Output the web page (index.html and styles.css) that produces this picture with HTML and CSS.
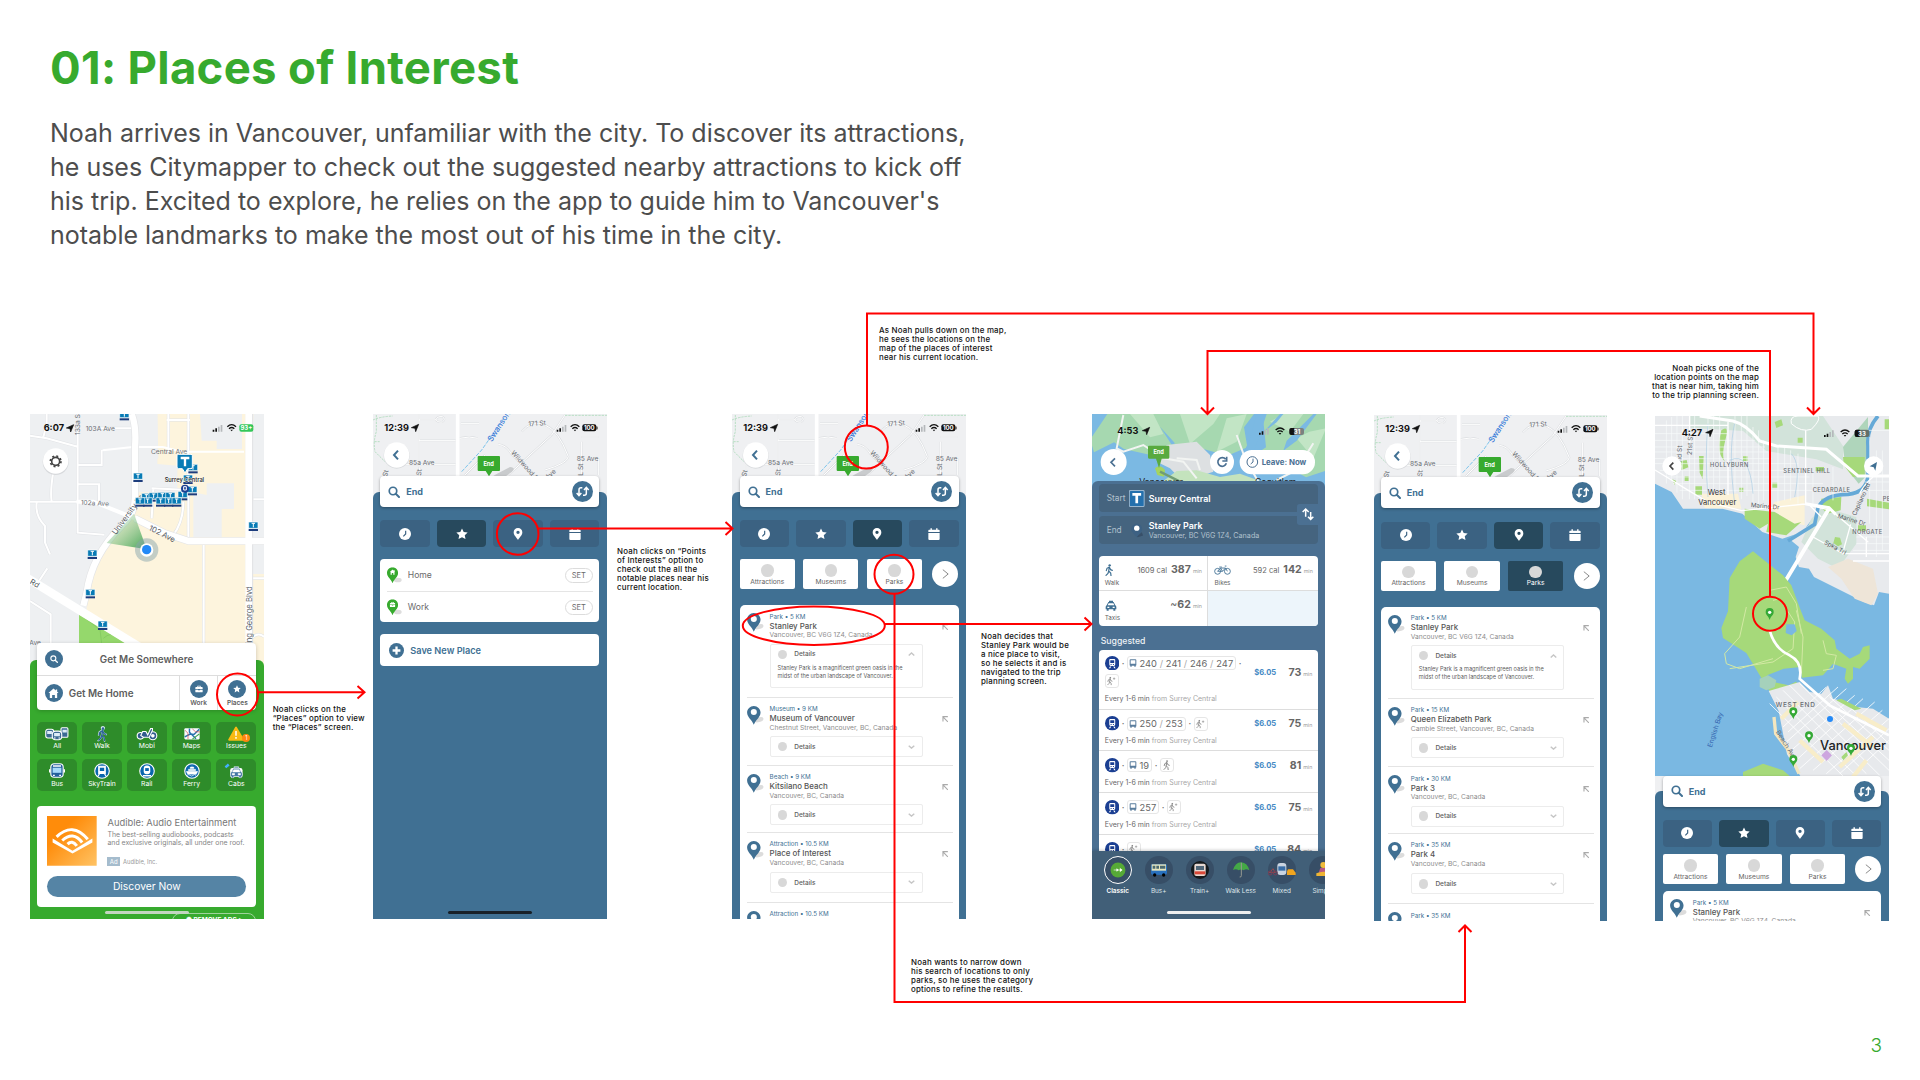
FILE: index.html
```html
<!DOCTYPE html>
<html lang="en">
<head>
<meta charset="utf-8">
<title>01: Places of Interest</title>
<link rel="stylesheet" href="styles.css">
</head>
<body>
<svg class="defs" aria-hidden="true">
  <symbol id="search" viewBox="0 0 24 24"><circle cx="10" cy="10" r="7.500" fill="none" stroke="currentColor" stroke-width="3.400"/><path d="M15.500 15.500 22 22" stroke="currentColor" stroke-width="4" stroke-linecap="round"/></symbol>
  <symbol id="swap" viewBox="0 0 63 63"><circle cx="31.500" cy="31.500" r="31.500" fill="#407093"/><g fill="none" stroke="#fff" stroke-width="4.500"><path d="M31 20h-4q-6 0-6 6v17M14 36l7 8 7-8M33 43h4q6 0 6-6V20M36 27l7-8 7 8"/></g></symbol>
  <symbol id="clock" viewBox="0 0 36 36"><circle cx="18" cy="18" r="18" fill="#fff"/><path d="M20 8v10l-7 7" fill="none" stroke="#3b6282" stroke-width="3.500"/></symbol>
  <symbol id="star" viewBox="0 0 24 24"><path d="M12 .8l3.400 7.200 7.900 1-5.800 5.400 1.500 7.800-7-3.900-7 3.900 1.500-7.800L.7 9l7.900-1z" fill="#fff"/></symbol>
  <symbol id="pin" viewBox="0 0 26 36"><path fill-rule="evenodd" d="M13 0C5.500 0 0 5.500 0 12.500 0 22 9 28 13 36c4-8 13-14 13-23.500C26 5.500 20.500 0 13 0zm0 8a5 5 0 1 1 0 10 5 5 0 0 1 0-10z" fill="currentColor"/></symbol>
  <symbol id="calendar" viewBox="0 0 32 34"><path d="M2 5h4V1h4v4h12V1h4v4h4q2 0 2 2v4H0V7q0-2 2-2zM0 14h32v17q0 3-3 3H3q-3 0-3-3z" fill="#fff"/></symbol>
  <symbol id="listpin" viewBox="0 0 50 58"><ellipse cx="35" cy="41" rx="14" ry="7" fill="#dcdcdc" transform="rotate(-15 35 41)"/><path d="M20 0C9 0 0 9 0 19c0 15 15 22 20 37 5-15 20-22 20-37C40 9 31 0 20 0z" fill="#407093"/><circle cx="20" cy="18" r="9" fill="#fff"/></symbol>
  <symbol id="greenpin" viewBox="0 0 46 50"><ellipse cx="33" cy="39" rx="12" ry="7" fill="#ddd"/><path d="M17 0C7 0 0 8 0 17c0 13 13 18 17 32 4-14 17-19 17-32C34 8 27 0 17 0z" fill="#37aa2e"/></symbol>
  <symbol id="house" viewBox="0 0 24 24"><path d="M12 1 1 11h3v11h5v-7h6v7h5V11h3l-3-2.700V3h-3v2.500z" fill="#fff"/></symbol>
  <symbol id="case" viewBox="0 0 24 24"><path d="M7 6V3q0-1 1-1h8q1 0 1 1v3h4q2 0 2 2v4H1V8q0-2 2-2zm3 0h4V4h-4zM1 14h8v2h6v-2h8v6q0 2-2 2H3q-2 0-2-2z" fill="#fff"/></symbol>
  <symbol id="northwest" viewBox="0 0 20 20"><path d="M18 2H3v15M3 3l15 15" fill="none" stroke="#aaa" stroke-width="3.400"/></symbol>
  <symbol id="down" viewBox="0 0 20 12"><path d="m2 2 8 7 8-7" fill="none" stroke="#c6c6c6" stroke-width="4"/></symbol>
  <symbol id="up" viewBox="0 0 20 12"><path d="m2 10 8-7 8 7" fill="none" stroke="#c6c6c6" stroke-width="4"/></symbol>
  <symbol id="next" viewBox="0 0 20 30"><path d="m2 2 16 13L2 28" fill="none" stroke="#777" stroke-width="2.600"/></symbol>
  <symbol id="train" viewBox="0 0 44 44"><circle cx="22" cy="22" r="22" fill="#1b3f92"/><path d="M16 9h12q3 0 3 3v14q0 4-4 4H17q-4 0-4-4V12q0-3 3-3zm0 4v8h12v-8zm1 11v3h3v-3zm7 0v3h3v-3zM15 32h4l-3 5h-4zm10 0h4l3 5h-4z" fill="#fff" fill-rule="evenodd"/></symbol>
  <symbol id="bus" viewBox="0 0 24 24"><path d="M5 1h14q3 0 3 3v14q0 2-2 2v3h-4v-3H8v3H4v-3q-2 0-2-2V4q0-3 3-3zm0 3v10h14V4z" fill="#5a7d9d" fill-rule="evenodd"/></symbol>
  <symbol id="walker" viewBox="0 0 24 36"><circle cx="14" cy="4" r="3.500" fill="currentColor"/><path d="M13 9 6 13 4 20M13 9l-2 12 6 6 1 8M11 21l-2 7-6 6M14 11l3 6 5 2" fill="none" stroke="currentColor" stroke-width="3.600" stroke-linecap="round"/></symbol>
  <symbol id="walkplus" viewBox="0 0 38 36"><use href="#walker" width="24" height="36"/><path d="M30 3v10M25 8h10" stroke="currentColor" stroke-width="2.500"/></symbol>
  <symbol id="taxi" viewBox="0 0 34 36"><path d="M11 5h12v4H11zM9 9h16l5 10q3 2 3 5v7h-3v4h-6v-4H10v4H4v-4H1v-7q0-3 3-5zm1 4-3 6h20l-3-6zM6 23v4h6v-4zm16 0v4h6v-4z" fill="currentColor" fill-rule="evenodd"/></symbol>
  <symbol id="bike" viewBox="0 0 52 30"><g fill="none" stroke="currentColor" stroke-width="2.700"><circle cx="11" cy="19" r="9"/><circle cx="41" cy="19" r="9"/><path d="m11 19 9-10h15L26 19H11M35 9l6 10M33 3h5M20 9l6 10M16 6h8"/></g></symbol>
  <g id="nav"><path d="M0 10 22 0 13 22 11 12z" fill="#111" stroke="#111" stroke-width="2" stroke-linejoin="round"/></g>
  <g id="bars"><path d="M0 14h5v6H0zM8 10h5v10H8z" fill="#111"/><path d="M16 5h5v15h-5zM24 0h5v20h-5z" fill="#b5b8bb"/></g>
  <g id="wifi" fill="none" stroke="#111" stroke-width="4"><path d="M0 7q13-12 26 0M5 13q8-7 16 0"/><path d="m9 16 4 5 4-5z" fill="#111" stroke="none"/></g>
  <g id="stop"><path d="M-14-12h28v19h-28z" fill="#087bb5" stroke="#fff" stroke-width="2"/><path d="M-14 9h28v6h-28z" fill="#1d3d7d"/><path d="M-5-8H5M0-8V4" stroke="#fff" stroke-width="3"/></g>
  <g id="mappin"><path d="M0 0c-3-12-12-14-12-24a12 12 0 0 1 24 0C12-14 3-12 0 0z" fill="#35a936"/><circle cy="-23" r="5" fill="#fff"/></g>

  <symbol id="suburb" viewBox="24 27 702 252">
    <path d="M24 27h702v252H24z" fill="#eff0f2"/>
    <path d="M162 27v160M162 106h110M162 45h50q5-12 20-10 12 8 0 16-15 2-20-8M66 279V180M66 178h206M163 187v50M288 55h54M284 100q30-8 54 0M300 210l60-60M400 118q25 3 40 30l80 80M430 210 560 90l40-60M470 80q30-36 70-20 40 15 70 95-3 20-70 40M650 110v100M650 96h50M700 160v50" fill="none" stroke="#dddfe2" stroke-width="6"/>
    <path d="M162 27v160M162 106h110M162 45h50q5-12 20-10 12 8 0 16-15 2-20-8M66 279V180M66 178h206M163 187v50M288 55h54M284 100q30-8 54 0M300 210l60-60M400 118q25 3 40 30l80 80M430 210 560 90l40-60M470 80q30-36 70-20 40 15 70 95-3 20-70 40M650 110v100M650 96h50M700 160v50" fill="none" stroke="#fff" stroke-width="3"/>
    <path d="M278 27v200" stroke="#fff" stroke-width="11"/>
    <path d="M24 45q20-10 60-12M34 30v50q-10 30-4 60l30 30M28 110h16M600 31h126" fill="none" stroke="#b8dfc4" stroke-width="3" stroke-dasharray="7 3"/>
    <path d="m290 200 60-65 70-100" fill="none" stroke="#7cc4ec" stroke-width="3" stroke-dasharray="12 4"/>
    <path d="m385 212 50-26q20 2 5 15l-20 14z" fill="#c9cbcd"/>
    <g class="streets"><text x="132" y="179">85a Ave</text><text x="490" y="64" transform="rotate(-4 490 60)">171 St</text><text x="635" y="168">85 Ave</text><text transform="translate(437 144) rotate(48)">Wildwood Pl</text><text transform="translate(548 224) rotate(-42)">Ave</text><text transform="translate(655 212) rotate(-90)">L St</text><text transform="translate(168 212) rotate(-84)">St</text><text transform="translate(66 216) rotate(-75)">St</text><text class="water" transform="translate(380 112) rotate(-57)">Swanson</text></g>
    <path d="M341 153h61q3 0 3 3v39q0 3-3 3h-20l-10 16-10-16h-21q-3 0-3-3v-39q0-3 3-3z" fill="#37aa2e"/><text x="371" y="182" class="flag">End</text>
    <text x="58" y="79" class="time">12:39</text><use href="#nav" x="139" y="58"/><use href="#bars" x="575" y="60"/><use href="#wifi" x="617" y="58"/><rect x="652" y="58" width="42" height="21" rx="6" fill="#111"/><path d="M696 65v8" stroke="#111" stroke-width="3"/><text x="673" y="76" class="batt">100</text>
    <circle cx="95" cy="152" r="39" fill="#d9dbde"/><circle cx="95" cy="150" r="38" fill="#fff"/><path d="m99 137-12 13 12 13" fill="none" stroke="#407093" stroke-width="6"/>
  </symbol>
</svg>

<main class="board">
  <header class="intro">
    <h1>01: Places of Interest</h1>
    <p>Noah arrives in Vancouver, unfamiliar with the city. To discover its attractions,<br>he uses Citymapper to check out the suggested nearby attractions to kick off<br>his trip. Excited to explore, he relies on the app to guide him to Vancouver's<br>notable landmarks to make the most out of his time in the city.</p>
  </header>

  <section class="phone home">
    <svg class="map" viewBox="30 27 702 756">
      <path d="M30 27h702v756H30z" fill="#eef0f2"/>
      <path d="M330 27h402v756H200V600q10-100 60-180l80-90q20-110 40-150l35-20-3-133z" fill="#fdf4dd"/>
      <path d="M330 27h82v150l60 5v80H350V150zM540 27h80v80h-75zM590 27h76v105h-76zM520 262l40 8v-35h82v77h-37v85h-85zM700 27h32v480h-38z" fill="#eef0f2"/>
      <path d="M177 627 340 718v60H177z" fill="#95d86c"/><path d="m190 635 50 40 10 80M250 700q20-20 60-10" fill="none" stroke="#7fc45d" stroke-width="2"/>
      <g fill="none" stroke="#e0e2e5" stroke-width="9"><path d="M173 80v303l80 6M30 92l50 8 93 25M245 135v45h-70M173 238h64v52M30 290h140M100 200q-10 60-5 90M80 27v30l-10 40M50 293q-5 40 25 70v50l15 35M82 490l-25 38M30 588l62 40v90M240 70h110M445 27v120M505 27v370M440 45h70M551 420v300M400 250l-5 90M490 290q0 60-30 100M395 250l110 5M700 283h32M694 520h38M694 700q20-20 38-5"/></g>
      <g fill="none" stroke="#fff" stroke-width="6"><path d="M173 80v303l80 6M30 92l50 8 93 25M245 135v45h-70M173 238h64v52M30 290h140M100 200q-10 60-5 90M80 27v30l-10 40M50 293q-5 40 25 70v50l15 35M82 490l-25 38M30 588l62 40v90M240 70h110M445 27v120M505 27v370M440 45h70M551 420v300M400 250l-5 90M490 290q0 60-30 100M395 250l110 5M700 283h32M694 520h38M694 700q20-20 38-5M248 136l90-10h90l60 14h184"/></g>
      <g fill="none" stroke="#e3e4e6" stroke-width="23"><path d="M335 27q15 40 10 100v150q0 50-40 85-90 90-105 200l-10 40M345 340l90 45 70 23h227M20 518l390 240M688 27v756"/></g>
      <g fill="none" stroke="#fff" stroke-width="19"><path d="M170 290h50l125 50 90 45 70 23h227" stroke-width="12"/><path d="M345 340l90 45 70 23h227M335 27q15 40 10 100v150q0 50-40 85-90 90-105 200l-10 40"/><path d="M20 518l390 240" stroke-width="26"/><path d="M686 27v756" stroke-width="20"/></g>
      <linearGradient id="beam" x1="1" y1="1" x2="0" y2="0"><stop stop-color="#3fa352"/><stop offset="1" stop-color="#b8d8ad" stop-opacity=".15"/></linearGradient>
      <path d="M380 433 260 414l82-88z" fill="url(#beam)"/>
      <circle cx="380" cy="435" r="35" fill="#8aa5ad" opacity=".5"/><circle cx="380" cy="435" r="20" fill="#fff"/><circle cx="380" cy="434" r="14" fill="#2389f7"/>
      <g class="streets"><text x="197" y="77">103A Ave</text><text x="393" y="148">Central Ave</text><text x="182" y="299" transform="rotate(3 182 299)">102a Ave</text><text class="mid" transform="translate(288 391) rotate(-54)">University Dr</text><text class="mid" transform="translate(385 374) rotate(27)">102 Ave</text><text class="mid" transform="translate(695 733) rotate(-90)">King George Blvd</text><text transform="translate(180 90) rotate(-90)">133a St</text><text class="mid" transform="translate(28 535) rotate(30)">Rd</text><text x="28" y="721">Ave</text></g>
      <use href="#stop" x="313" y="31"/><use href="#stop" x="354" y="216"/><use href="#stop" x="519" y="190"/><use href="#stop" x="504" y="222"/><use href="#stop" x="517" y="256"/><use href="#stop" x="488" y="271"/><use href="#stop" x="379" y="277"/><use href="#stop" x="401" y="275"/><use href="#stop" x="427" y="274"/><use href="#stop" x="451" y="274"/><use href="#stop" x="383" y="290"/><use href="#stop" x="360" y="290"/><use href="#stop" x="446" y="290"/><use href="#stop" x="422" y="290"/><use href="#stop" x="470" y="290"/><use href="#stop" x="700" y="363"/><use href="#stop" x="217" y="447"/><use href="#stop" x="211" y="565"/><use href="#stop" x="248" y="660"/>
      <path d="M476 148h37q4 0 4 4v34q0 5-4 5h-10l-8 13-8-13h-11q-5 0-5-5v-34q0-4 5-4z" fill="#087bb5" stroke="#fff" stroke-width="3"/><path d="M482 159h26M495 159v25" stroke="#fff" stroke-width="7"/><circle cx="495" cy="251" r="12" fill="#1b3f92"/><path d="M491 245h8v10h-8z" fill="none" stroke="#fff" stroke-width="3"/>
      <text x="434" y="230" class="station">Surrey Central</text>
      <text x="71" y="79" class="time">6:07</text><use href="#nav" x="139" y="59"/><use href="#bars" x="578" y="60"/><use href="#wifi" x="622" y="58"/><rect x="658" y="58" width="42" height="22" rx="6" fill="#35c759"/><text x="679" y="76" class="batt">93+</text>
      <circle cx="107" cy="171" r="39" fill="#d7d9dc"/><circle cx="107" cy="168" r="38" fill="#fff"/><circle cx="107" cy="169" r="12" fill="none" stroke="#444" stroke-width="5"/><circle cx="107" cy="169" r="16" fill="none" stroke="#444" stroke-width="5" stroke-dasharray="6 6.560"/>
    </svg>
    <div class="panel green">
      <div class="goto">
        <div class="somewhere"><i class="disc"><svg><use href="#search"/></svg></i><b>Get Me Somewhere</b></div>
        <div class="shortcuts">
          <div class="gohome"><i class="disc"><svg class="lg"><use href="#house"/></svg></i><b>Get Me Home</b></div>
          <div class="short"><i class="disc"><svg><use href="#case"/></svg></i><span>Work</span></div>
          <div class="short"><i class="disc"><svg><use href="#star"/></svg></i><span>Places</span></div>
        </div>
      </div>
      <div class="modes">
        <div><svg viewBox="0 0 66 44"><g stroke="#fff" stroke-width="3" fill="#3b6a94"><rect x="2" y="9" width="22" height="24" rx="6"/><rect x="44" y="5" width="19" height="26" rx="3"/><rect x="20" y="14" width="26" height="24" rx="9"/></g><path d="M6 14h13v8H6zM48 10h12v8H48zM25 19h16v9H25z" fill="#dcecf7"/><circle cx="27" cy="33" r="2" fill="#fff"/><circle cx="39" cy="33" r="2" fill="#fff"/></svg><span>All</span></div>
        <div><svg viewBox="0 0 66 44" color="#dfeefa"><g stroke="#dfeefa" stroke-width="3"><use href="#walker" x="19" y="1" width="28" height="42"/></g><g color="#30649a"><use href="#walker" x="21" y="3" width="25" height="38"/></g></svg><span>Walk</span></div>
        <div><svg viewBox="0 0 66 44"><g stroke="#fff" stroke-width="3" fill="#315c8e"><circle cx="15" cy="27" r="9"/><circle cx="49" cy="27" r="11"/><path d="m16 26 5-11h9l5 10 8-18h5v5l-9 19H23z"/></g><circle cx="49" cy="27" r="5" fill="#fff"/></svg><span>Mobi</span></div>
        <div><svg viewBox="0 0 66 44"><rect x="12" y="6" width="42" height="31" rx="3" fill="#f9fbff"/><path d="m13 30 15-8 11 1L53 9M26 7v10l18 18" fill="none" stroke="#2873ae" stroke-width="4"/><path d="m14 12 8 8v16M34 8l9 8h11" fill="none" stroke="#d85357" stroke-width="2"/><path d="M34 36 53 22" stroke="#42a84e" stroke-width="3"/></svg><span>Maps</span></div>
        <div><svg viewBox="0 0 66 44"><path d="M33 4 14 38h39z" fill="#f7ba13" stroke="#f7ba13" stroke-width="5" stroke-linejoin="round"/><path d="M33 14v13M33 30v5" stroke="#fff" stroke-width="4"/></svg><span>Issues</span><em>1</em></div>
        <div><svg viewBox="0 0 66 44"><rect x="16" y="2" width="34" height="37" rx="9" fill="#235f9b" stroke="#fff" stroke-width="3"/><path d="M21 13h24v14H21z" fill="#a7dafa"/><path d="M22 8h22M22 34h5M39 34h5M13 17v9M53 17v9" stroke="#fff" stroke-width="4"/></svg><span>Bus</span></div>
        <div><svg viewBox="0 0 66 44"><circle cx="33" cy="22" r="20" fill="#0966ad" stroke="#fff" stroke-width="3"/><path d="M24 9h18v20H24zM26 30l-4 6M40 30l4 6" fill="#fff" stroke="#fff" stroke-width="3"/><path d="M27 13h12v9H27z" fill="#0966ad"/></svg><span>SkyTrain</span></div>
        <div><svg viewBox="0 0 66 44"><circle cx="33" cy="22" r="20" fill="#0966ad" stroke="#fff" stroke-width="3"/><rect x="24" y="7" width="18" height="24" rx="8" fill="#fff"/><path d="M22 35h22" stroke="#fff" stroke-width="4"/><path d="M28 14h10v8H28z" fill="#0966ad"/></svg><span>Rail</span></div>
        <div><svg viewBox="0 0 66 44"><circle cx="33" cy="22" r="20" fill="#0966ad" stroke="#fff" stroke-width="3"/><path d="M17 23h32l-4 8H21zM23 17h20v4H23zM28 11h10v4H28zM33 7v5" fill="#fff" stroke="#fff"/><path d="M20 34q4-4 8 0t8 0 8 0" stroke="#fff" fill="none" stroke-width="2"/></svg><span>Ferry</span></div>
        <div><svg viewBox="0 0 66 44"><rect x="17" y="14" width="34" height="24" rx="6" fill="#fff"/><g color="#4276a5" stroke="#fff" stroke-width="1.500"><use href="#taxi" x="16" y="5" width="36" height="37"/></g><path d="m4 12 9-8" stroke="#44afff" stroke-width="7"/></svg><span>Cabs</span></div>
      </div>
      <div class="ad">
        <div class="adtop">
          <svg class="audible" viewBox="0 0 150 150"><linearGradient id="or" x1="0" y1="0" x2="1" y2="1"><stop offset=".3" stop-color="#ff8c0a"/><stop offset="1" stop-color="#ffc364"/></linearGradient><path d="M0 0h150v150H0z" fill="url(#or)"/><path d="m17 68 60 37 60-37v12l-60 33-60-33z" fill="#fff"/><g fill="none" stroke="#fff" stroke-width="9"><path d="M29 63q48-47 94 7M46 74q33-30 60 6M62 85q14-14 28 5"/></g></svg>
          <div class="adcopy"><strong>Audible: Audio Entertainment</strong><p>The best-selling audiobooks, podcasts<br>and exclusive originals, all under one roof.</p><small><i>Ad</i>Audible, Inc.</small></div>
        </div>
        <div class="discover">Discover Now</div>
      </div>
      <div class="remove">✺ REMOVE ADS &gt;</div>
    </div>
    <div class="indicator"></div>
  </section>

  <section class="phone saved">
    <svg class="map short-map"><use href="#suburb"/></svg>
    <div class="panel">
      <div class="search"><svg><use href="#search"/></svg><b>End</b><svg class="swap"><use href="#swap"/></svg></div>
      <nav class="tabs"><i><svg><use href="#clock"/></svg></i><i class="on"><svg><use href="#star"/></svg></i><i><svg><use href="#pin"/></svg></i><i><svg><use href="#calendar"/></svg></i></nav>
      <div class="set-list">
        <div><svg viewBox="0 0 46 50"><use href="#greenpin"/><use href="#house" x="8" y="6" width="18" height="18"/></svg><span>Home</span><u>SET</u></div>
        <div><svg viewBox="0 0 46 50"><use href="#greenpin"/><use href="#case" x="8" y="7" width="18" height="18"/></svg><span>Work</span><u>SET</u></div>
      </div>
      <div class="save"><svg viewBox="0 0 46 46"><circle cx="23" cy="23" r="23" fill="#407093"/><path d="M23 11v24M11 23h24" stroke="#fff" stroke-width="7"/></svg>Save New Place</div>
    </div>
    <div class="indicator dark"></div>
  </section>

  <section class="phone places">
    <svg class="map short-map"><use href="#suburb"/></svg>
    <div class="panel">
      <div class="search"><svg><use href="#search"/></svg><b>End</b><svg class="swap"><use href="#swap"/></svg></div>
      <nav class="tabs"><i><svg><use href="#clock"/></svg></i><i><svg><use href="#star"/></svg></i><i class="on"><svg><use href="#pin"/></svg></i><i><svg><use href="#calendar"/></svg></i></nav>
      <div class="cats"><span>Attractions</span><span>Museums</span><span>Parks</span><b><svg><use href="#next"/></svg></b></div>
      <div class="list">
        <article><svg class="lp"><use href="#listpin"/></svg><div class="place"><small>Park • 5 KM</small><h3>Stanley Park</h3><p>Vancouver, BC V6G 1Z4, Canada</p></div><svg class="nw"><use href="#northwest"/></svg><div class="details open"><b>Details<svg><use href="#up"/></svg></b><p>Stanley Park is a magnificent green oasis in the<br>midst of the urban landscape of Vancouver.</p></div></article>
        <article><svg class="lp"><use href="#listpin"/></svg><div class="place"><small>Museum • 9 KM</small><h3>Museum of Vancouver</h3><p>Chestnut Street, Vancouver, BC, Canada</p></div><svg class="nw"><use href="#northwest"/></svg><div class="details"><b>Details<svg><use href="#down"/></svg></b></div></article>
        <article><svg class="lp"><use href="#listpin"/></svg><div class="place"><small>Beach • 9 KM</small><h3>Kitsilano Beach</h3><p>Vancouver, BC, Canada</p></div><svg class="nw"><use href="#northwest"/></svg><div class="details"><b>Details<svg><use href="#down"/></svg></b></div></article>
        <article><svg class="lp"><use href="#listpin"/></svg><div class="place"><small>Attraction • 10.5 KM</small><h3>Place of Interest</h3><p>Vancouver, BC, Canada</p></div><svg class="nw"><use href="#northwest"/></svg><div class="details"><b>Details<svg><use href="#down"/></svg></b></div></article>
        <article><svg class="lp"><use href="#listpin"/></svg><div class="place"><small>Attraction • 10.5 KM</small></div></article>
      </div>
    </div>
  </section>

  <section class="phone trip">
    <svg class="map" viewBox="36 27 702 225">
      <path d="M36 27h702v225H36z" fill="#7bb9e3"/>
      <path d="M36 95 60 60l22-33h440l-30 40 10 60-60 25-90-25-130 25-90-20-30-20-60 30-6-20z" fill="#a6d8b0"/><path d="M548 27h190v170l-60 20-70-40-90 20-20-30 60-40z" fill="#a6d8b0"/>
      <path d="m150 27 60 70 40-10-30-60zM300 27l30 90 70-60 20-30zM440 40l-30 100 60-30 30-83zM570 50l60 30 40-53h-60zM650 100l50 60 38-90-50 10z" fill="#c2e5c5"/>
      <path d="m240 65 45 50-10 4zM530 27h30l-20 60-30 80-20-20 25-60zM600 27l-50 55 40-30 20-25zM700 27l-80 80-10 30 40-30 60-80z" fill="#7bb9e3"/>
      <path d="m230 170 30-50 90-10 40 40 10 50-60 20-50-10-20-20z" fill="#dde0e2"/><path d="m250 228 40-30 60-2 70 20 60-10 60 22z" fill="#c4e3bd"/><path d="M225 190q15-15 30 5l-3 20-20-5z" fill="#a5d45f"/>
      <path d="m130 30-20 100 20 10 60-20 60 40 60 10 40 50M290 160l60 5 10 30M470 90l25 70 40 70M590 225l60-30 50-80" fill="none" stroke="#f2f4f2" stroke-width="6"/><path d="m240 200 60 30" stroke="#719c75" stroke-width="7"/>
      <path d="M207 122h58q3 0 3 3v32q0 4-3 4h-20l-8 28-9-28h-21q-3 0-3-4v-32q0-3 3-3z" fill="#58aa3f"/><text x="236" y="148" class="flag">End</text>
      <text x="112" y="88" class="time">4:53</text><use href="#nav" x="187" y="67"/><use href="#bars" x="537" y="69"/><use href="#wifi" x="587" y="68"/><rect x="628" y="69" width="44" height="21" rx="6" fill="#7b8180"/><path d="M643 69h-9q-6 0-6 6v9q0 6 6 6h9z" fill="#111"/><text x="651" y="87" class="batt">31</text>
      <text x="178" y="240" class="cut">Vancouver</text><text x="525" y="240" class="cut">Coquitlam</text>
      <g fill="#fff"><circle cx="101" cy="171" r="39"/><circle cx="426" cy="171" r="36"/><rect x="479" y="135" width="226" height="73" rx="36"/></g>
      <g fill="none" stroke="#4b7092" stroke-width="5"><path d="m105 160-12 12 12 12"/><path d="M437 163a13 13 0 1 0 2 12M440 155v13h-13"/><circle cx="517" cy="171" r="16" stroke-width="3"/><path d="M519 161v10l-7 6" stroke-width="3"/></g><text x="545" y="179" class="leave">Leave: Now</text>
    </svg>
    <div class="panel">
      <div class="route"><div class="leg"><span>Start</span><svg viewBox="0 0 46 50"><rect x="1" y="1" width="44" height="48" rx="4" fill="#2470ad" stroke="#9ab6ce" stroke-width="3"/><path d="M10 13h26M23 13v26" stroke="#fff" stroke-width="8"/></svg><b>Surrey Central</b></div><div class="leg"><span>End</span><svg viewBox="0 0 46 50"><path d="m22 43 16-13 4 10-16 5z" fill="#385069"/><path d="M23 5C14 5 7 12 7 21c0 10 12 15 16 25 4-10 16-15 16-25 0-9-7-16-16-16z" fill="#3d6183"/><circle cx="23" cy="18" r="8" fill="#fff"/></svg><b>Stanley Park<small>Vancouver, BC V6G 1Z4, Canada</small></b></div><svg class="flip" viewBox="0 0 63 63"><path d="M0 8q0-8 8-8h55v63H8q-8 0-8-8z" fill="#4b7092"/><path d="M26 38V15M17 24l9-9 9 9M41 24v22M33 38l8 8 8-8" fill="none" stroke="#fff" stroke-width="4.500"/></svg></div>
      <div class="direct">
        <div><p><svg class="w"><use href="#walker"/></svg><em>1609 cal</em><b>387</b><small>min</small></p><span>Walk</span></div>
        <div><p><svg class="bk"><use href="#bike"/></svg><em>592 cal</em><b>142</b><small>min</small></p><span>Bikes</span></div>
        <div><p><svg class="tx"><use href="#taxi"/></svg><b><s>~</s>62</b><small>min</small></p><span>Taxis</span></div>
        <div class="blank"></div>
      </div>
      <h2>Suggested</h2>
      <div class="trips">
        <div class="t1"><div class="line"><svg class="tr"><use href="#train"/></svg>·<q><svg><use href="#bus"/></svg>240 <s>/</s> 241 <s>/</s> 246 <s>/</s> 247</q>·<q class="wk"><svg><use href="#walkplus"/></svg></q></div><b>$6.05</b><strong>73<small>min</small></strong><p>Every 1-6 min <span>from Surrey Central</span></p></div>
        <div><div class="line"><svg class="tr"><use href="#train"/></svg>·<q><svg><use href="#bus"/></svg>250 <s>/</s> 253</q>·<q class="wk"><svg><use href="#walkplus"/></svg></q></div><b>$6.05</b><strong>75<small>min</small></strong><p>Every 1-6 min <span>from Surrey Central</span></p></div>
        <div><div class="line"><svg class="tr"><use href="#train"/></svg>·<q><svg><use href="#bus"/></svg>19</q>·<q class="wk"><svg><use href="#walker"/></svg></q></div><b>$6.05</b><strong>81<small>min</small></strong><p>Every 1-6 min <span>from Surrey Central</span></p></div>
        <div><div class="line"><svg class="tr"><use href="#train"/></svg>·<q><svg><use href="#bus"/></svg>257</q>·<q class="wk"><svg><use href="#walkplus"/></svg></q></div><b>$6.05</b><strong>75<small>min</small></strong><p>Every 1-6 min <span>from Surrey Central</span></p></div>
        <div><div class="line"><svg class="tr"><use href="#train"/></svg>·<q class="wk"><svg><use href="#walkplus"/></svg></q></div><b>$6.05</b><strong>84<small>min</small></strong></div>
      </div>
    </div>
    <div class="dock">
      <div class="on"><i><svg viewBox="0 0 84 84"><circle cx="42" cy="42" r="24" fill="#56a936"/><path d="M28 42h28M38 38l5 4-5 4zM48 36l7 6-7 6" stroke="#fff" stroke-width="2" fill="#fff"/></svg></i>Classic</div>
      <div><i><svg viewBox="0 0 84 84"><rect x="18" y="24" width="48" height="32" rx="5" fill="#2870bd"/><path d="M20 25h43v19H20z" fill="#e7e5bd"/><path d="M23 29h8v9h-8zM34 29h8v9h-8zM45 29h16v9H45z" fill="#4c6a71"/><circle cx="29" cy="57" r="5"/><circle cx="56" cy="57" r="5"/></svg></i>Bus+</div>
      <div><i><svg viewBox="0 0 84 84"><circle cx="42" cy="42" r="27" fill="#15191c"/><rect x="25" y="23" width="34" height="37" rx="6" fill="#e7d8d2"/><path d="M30 30h24v12H30z" fill="#506678"/><path d="M26 46h32v9H26z" fill="#d94838"/></svg></i>Train+</div>
      <div><i><svg viewBox="0 0 84 84"><path d="M18 42q7-22 24-23 20 2 25 24-10-6-17 0-8-5-15 0-8-6-17-1z" fill="#44a846"/><path d="M43 20v39q0 5-5 4" stroke="#979a91" stroke-width="3" fill="none"/></svg></i>Walk Less</div>
      <div><i><svg viewBox="0 0 84 84"><rect x="28" y="21" width="27" height="36" rx="9" fill="#cad4e1"/><path d="M31 31h21v13H31z" fill="#386da7"/><path d="M60 40h15l8 10v7H57V46z" fill="#f0a51f"/><path d="M2 49h20M8 46l7-8 7 12" stroke="#9b494d" stroke-width="3" fill="none"/><circle cx="6" cy="51" r="6" fill="none" stroke="#783e56" stroke-width="3"/><circle cx="22" cy="51" r="6" fill="none" stroke="#783e56" stroke-width="3"/></svg></i>Mixed</div>
      <div><i><svg viewBox="0 0 84 84"><circle cx="43" cy="27" r="9" fill="#f0bc3c"/><path d="M34 36h17l4 14H29z" fill="#b75683"/><path d="M22 52q20-10 42 0v8H22z" fill="#efb433"/></svg></i>Simple</div>
    </div>
    <div class="indicator"></div>
  </section>

  <section class="phone parks">
    <svg class="map short-map"><use href="#suburb"/></svg>
    <div class="panel">
      <div class="search"><svg><use href="#search"/></svg><b>End</b><svg class="swap"><use href="#swap"/></svg></div>
      <nav class="tabs"><i><svg><use href="#clock"/></svg></i><i><svg><use href="#star"/></svg></i><i class="on"><svg><use href="#pin"/></svg></i><i><svg><use href="#calendar"/></svg></i></nav>
      <div class="cats"><span>Attractions</span><span>Museums</span><span class="on">Parks</span><b><svg><use href="#next"/></svg></b></div>
      <div class="list">
        <article><svg class="lp"><use href="#listpin"/></svg><div class="place"><small>Park • 5 KM</small><h3>Stanley Park</h3><p>Vancouver, BC V6G 1Z4, Canada</p></div><svg class="nw"><use href="#northwest"/></svg><div class="details open"><b>Details<svg><use href="#up"/></svg></b><p>Stanley Park is a magnificent green oasis in the<br>midst of the urban landscape of Vancouver.</p></div></article>
        <article><svg class="lp"><use href="#listpin"/></svg><div class="place"><small>Park • 15 KM</small><h3>Queen Elizabeth Park</h3><p>Cambie Street, Vancouver, BC, Canada</p></div><svg class="nw"><use href="#northwest"/></svg><div class="details"><b>Details<svg><use href="#down"/></svg></b></div></article>
        <article><svg class="lp"><use href="#listpin"/></svg><div class="place"><small>Park • 30 KM</small><h3>Park 3</h3><p>Vancouver, BC, Canada</p></div><svg class="nw"><use href="#northwest"/></svg><div class="details"><b>Details<svg><use href="#down"/></svg></b></div></article>
        <article><svg class="lp"><use href="#listpin"/></svg><div class="place"><small>Park • 35 KM</small><h3>Park 4</h3><p>Vancouver, BC, Canada</p></div><svg class="nw"><use href="#northwest"/></svg><div class="details"><b>Details<svg><use href="#down"/></svg></b></div></article>
        <article><svg class="lp"><use href="#listpin"/></svg><div class="place"><small>Park • 35 KM</small></div></article>
      </div>
    </div>
  </section>

  <section class="phone explore">
    <svg class="map" viewBox="46 197 702 1080">
      <path d="M46 197h702v1080H46z" fill="#7ab8e2"/>
      <path d="M46 197h702v533l-30-5-15 40-30-10-60-30-90-45-15-25-30-5-10-30 10-30-30-25 60-40 10-20-30 40-60 20-60-20-60-55-60-15H130l-34-50-50-25z" fill="#e8eaed"/>
      <path d="M150 197h400l60 90v70l-80-30-150-25-70-60-160-10zM550 470l100 30v80l-55 75-60-30-50-50 30-70z" fill="#d2e3da"/><path d="m610 290 75-90v80l-8 100-20 20-40-50z" fill="#afd5bb"/>
      <path d="m565 650 60-25 75 30 15 75-20 35-50-20-40-60z" fill="#eee5d8"/>
      <path d="M185 430h110l10 45-110-2zM405 455l90-20v90l-50-10-50-40z" fill="#fbf2d9"/>
      <g fill="#a6d97a"><path d="m315 475 90 10 60 35 20-5-45 40-60-10 5-25-25 15-45-30zM610 320h65v55l-35 5-28-35zM178 317h14l-3 70-9-20zM167 408h20v25h-20zM124 332l17-3 5 22-20 8zM405 215l20-8 5 18-20 8zM474 262h15v15h-15zM310 318h14v14h-14zM398 397h15v15h-15zM299 412h12v12h-12zM528 350h25v13h-25zM98 387l12 5-5 12zM135 378h12v14h-12zM735 207h13v30h-13zM586 560l15 2 6 20-12 6-14-10zM655 525h24v16h-24zM682 445l66 12v20l-66-9zM545 445l60-5-2 40-40 10-20-20zM245 240q25-20 12 30t0 65q-30-25-12-95z"/></g>
      <path d="M715 197q-35 40-30 90v90q-5 50-60 55-70 0-90 40l-10 50-80 50" fill="none" stroke="#65a9d7" stroke-width="11"/>
      <g fill="none" stroke="#f8fafb" stroke-width="2"><path d="M80 210v190M96 200v190M112 197v230M128 197v250M149 197v250M165 197v250M205 197v230M222 197v230M240 197v230M286 197v230M305 197v250M322 197v240M340 230v230M357 240v230M372 270v180M390 280v160M415 290v170M435 290v160M453 300v150M475 310v150M520 360v100M580 350v100M46 250h220M46 270h300M46 290h330M46 305h340M46 325h350M46 340h430M60 360h430M80 380h430M100 400h450M120 420h500M640 240h108M690 260v260M710 300v320M728 300v300M675 395h73M670 420h78M650 560h98M650 580h98M640 600h108"/></g>
      <path d="M205 220q-10 100 0 220M285 220q-20 80 0 240M270 330q60-30 70 100M455 310q30 30 10 130" fill="none" stroke="#abcde4" stroke-width="2"/>
      <g fill="none" stroke="#fff" stroke-width="6"><path d="M46 359q50 30 85 52l75 45 100 25 190-20 80 20 110 95M498 240v225M265 214v220M46 225h220M150 197v80M520 560l90 50h138M608 612l25-90M545 500l-35-35M660 430q15-30 40-50M680 560v60M390 197v190M640 632h108" stroke-width="4"/><path d="M180 197l100 15q40 10 80 60l50 15 150 10 95 80h93M498 460l70 12 20 20" stroke-width="9"/></g>
      <path d="m567 477-160 265M410 715l-20 35" stroke="#fff" stroke-width="12"/>
      <path d="M455 220q-5-23 20-23h60q10 10-20 40-30 10-60-17z" fill="none" stroke="#fff" stroke-width="3"/>
      <path d="m430 675 25 30 30 80 10 25 50 25 40 35 5 25 40 30 30-15 10-20 20-5v40l-30 30-20-5 0 35-15 15-10-15 5-30-40-15-30 35-45 5-40 5 10 20 50 60 20-15 20 5 25 40 40-10 30 30 43 10v123H482l-40-70-22-110-40-60-60-100-70-45-5-30 20-50 5-100 30-50 40-30z" fill="#a6d97a"/>
      <path d="m400 750 20-5 45 70-5 80-60 40-130 20M320 770l-20 90-45 50 5 30 40 15 100-30M470 780l20 80-5 110M550 870l10 40 30 5-10 40-30 5M390 720l50-10 30 50 15 90" fill="none" stroke="#d3e9a4" stroke-width="3"/>
      <path d="m382 975 50-20 50-5 5 35-40 20-45-10zM440 822l25 0 6 20-15 13-18-7zM445 840l25 0-15 13zM440 830l30 10-20 10z" fill="#7ab8e2"/><path d="m360 985 25-10 25 15-5 20-25 10-20-10z" fill="#a5d1bb"/>
      <path d="m480 995 30 30 35 5 20-25 15 40 40 10 30 15 50 5 48 30v172H482l-40-65-25-130-30-60z" fill="#e7e9ec"/>
      <g fill="none" stroke="#fff" stroke-width="2.500"><path d="m430 1130 130-120M445 1145l150-135M440 1175l180-160M455 1200l190-165M475 1225l195-180M480 1255l225-200M520 1260l208-180M560 1270l188-165M600 1270l148-135M640 1270l108-100M390 1060l220 217M410 1040l240 237M430 1020l250 250M450 1005l270 270M480 1000l268 260M520 1020l228 210M570 1040l178 160M620 1060l128 120"/></g>
      <g fill="none" stroke="#f8edc9" stroke-width="13"><path d="m425 1105 50-50M610 1120l90 70M480 1170l70 65M600 1250l100-90M650 1090l90 50M680 1230l-40 50"/></g>
      <path d="m403 1100 5 50 35 45 35 75" fill="none" stroke="#f3e6bf" stroke-width="10"/><path d="m310 1265 60-25 60 20 20 17H310zM590 1050l15-5 60 30-20 5zM605 1220l15-15 5 10-14 15z" fill="#a6d97a"/>
      <path d="M390 840q15 55 60 75 40 20 30 70l90 80 178 90" fill="none" stroke="#fff" stroke-width="8"/><path d="m545 1215 16-16 16 16-16 17z" fill="#cda6df"/>
      <circle cx="571" cy="1106" r="9" fill="#2389f7"/>
      <g class="area"><text x="211" y="351">HOLLYBURN</text><text x="431" y="367">SENTINEL HILL</text><text x="519" y="426">CEDARDALE</text><text x="638" y="551">NORGATE</text><text x="729" y="452">PEMB</text><text x="408" y="1071" class="end">WEST END</text></g>
      <g class="city"><text x="204" y="435">West</text><text x="176" y="465">Vancouver</text></g>
      <g class="streets"><text class="road" transform="translate(333 470) rotate(5)">Marine Dr</text><text class="road" transform="translate(593 502) rotate(17)">Marine Dr</text><text class="road" transform="translate(552 580) rotate(28)">Spka Trl</text><text class="road" transform="translate(648 497) rotate(-65)">Capilano Rd</text><text transform="translate(125 335) rotate(-87)">nd St</text><text transform="translate(156 315) rotate(-87)">21st St</text><text transform="translate(408 1145) rotate(58)">Beach Ave</text><text class="bay" transform="translate(216 1192) rotate(-72)">English Bay</text></g>
      <text x="541" y="1198" class="van">Vancouver</text>
      <use href="#mappin" x="461" y="1107"/><use href="#mappin" x="508" y="1179"/><use href="#mappin" x="461" y="1250"/><use href="#mappin" x="634" y="1217"/><use href="#mappin" x="390" y="809"/>
      <text x="126" y="258" class="time">4:27</text><use href="#nav" x="198" y="237"/><use href="#bars" x="553" y="240"/><use href="#wifi" x="603" y="238"/><rect x="645" y="238" width="44" height="22" rx="6" fill="#626f6a"/><path d="M660 238h-9q-6 0-6 6v10q0 6 6 6h9z" fill="#111"/><text x="667" y="257" class="batt">33</text>
      <circle cx="97" cy="347" r="29" fill="#fff"/><path d="m101 337-10 10 10 11" fill="none" stroke="#444" stroke-width="5"/><circle cx="702" cy="347" r="29" fill="#fff"/><path d="m690 348 22-13-5 26-5-10z" fill="#407093"/>
    </svg>
    <div class="panel">
      <div class="search"><svg><use href="#search"/></svg><b>End</b><svg class="swap"><use href="#swap"/></svg></div>
      <nav class="tabs"><i><svg><use href="#clock"/></svg></i><i class="on"><svg><use href="#star"/></svg></i><i><svg><use href="#pin"/></svg></i><i><svg><use href="#calendar"/></svg></i></nav>
      <div class="cats"><span>Attractions</span><span>Museums</span><span>Parks</span><b><svg><use href="#next"/></svg></b></div>
      <div class="list"><article><svg class="lp"><use href="#listpin"/></svg><div class="place"><small>Park • 5 KM</small><h3>Stanley Park</h3><p>Vancouver, BC V6G 1Z4, Canada</p></div><svg class="nw"><use href="#northwest"/></svg></article></div>
    </div>
  </section>

  <svg class="flow" viewBox="0 0 1920 1080">
    <ellipse cx="237.500" cy="694.500" rx="20.500" ry="21"/><path d="M258 692.300H364M357.500 686l7 6.300-7 6.300"/>
    <circle cx="517.700" cy="534" r="20.800"/><path d="M538 528.500H732M725.500 522l7 6.500-7 6.500"/>
    <circle cx="866.300" cy="447" r="21.500"/><path d="M867 425.500V313.500H1813.500V413M1807 407.500l6.500 6.500 6.500-6.500"/>
    <circle cx="894" cy="574.300" r="19.500"/><path d="M894.500 594v408H1465V926M1458.500 932l6.500-6.500 6.500 6.500"/>
    <ellipse cx="813.800" cy="625.700" rx="71" ry="19.200"/><path d="M885 624H1091M1084.500 617.500l7 6.500-7 6.500"/>
    <circle cx="1770" cy="613.700" r="17"/><path d="M1770 596.500V351H1207.500V413M1201 407.500l6.500 6.500 6.500-6.500"/>
  </svg>
  <p class="note n1">Noah clicks on the<br>“Places” option to view<br>the “Places” screen.</p>
  <p class="note n2">Noah clicks on “Points<br>of Interests” option to<br>check out the all the<br>notable places near his<br>current location.</p>
  <p class="note n3">As Noah pulls down on the map,<br>he sees the locations on the<br>map of the places of interest<br>near his current location.</p>
  <p class="note n4">Noah decides that<br>Stanley Park would be<br>a nice place to visit,<br>so he selects it and is<br>navigated to the trip<br>planning screen.</p>
  <p class="note n5">Noah wants to narrow down<br>his search of locations to only<br>parks, so he uses the category<br>options to refine the results.</p>
  <p class="note n6">Noah picks one of the<br>location points on the map<br>that is near him, taking him<br>to the trip planning screen.</p>
  <footer>3</footer>
</main>
</body>
</html>
```
FILE: styles.css
```css
* { box-sizing: border-box; margin: 0; padding: 0; }
body { background: #fff; font-family: Inter, "Open Sans", sans-serif; }
i, em, u, s, q { font-style: normal; text-decoration: none; }
q::before, q::after { content: none; }
svg { display: block; flex: none; }
.defs { position: absolute; width: 0; height: 0; }
.board { position: relative; width: 1920px; height: 1080px; overflow: hidden; }
.intro { padding: 39px 50px 0; }
.intro h1 { font: 700 45.500px/58px Inter, sans-serif; color: #37aa2e; letter-spacing: .3px; }
.intro p { margin-top: 19px; font-size: 25px; line-height: 34.1px; color: #4d4d4d; }

/* phone frames on the storyboard canvas */
.phone { position: absolute; top: 414px; width: 233.600px; height: 505.300px; overflow: hidden; display: flex; flex-direction: column; background: #eff0f2; }
.home { left: 30px; }
.saved { left: 373px; }
.places { left: 732.300px; }
.trip { left: 1091.700px; }
.parks { left: 1373.500px; top: 415.300px; }
.explore { left: 1655.300px; top: 415.700px; height: 505px; }
.map { width: 234px; height: 252px; }
.short-map { height: 84px; }
.panel { flex: 1; min-height: 0; margin-top: -6px; border-radius: 6px 6px 0 0; background: #407093; display: flex; flex-direction: column; padding: 0 7.300px; position: relative; }

.streets { font-size: 20px; fill: #6b6f75; }
.streets .mid { font-size: 23px; fill: #55595e; }
.streets .road { font-size: 18.500px; fill: #55595e; }
.streets .water { font-size: 24px; fill: #2a6fd6; }
.streets .bay { font-size: 20px; fill: #3263ae; }
.flag { font: 700 17px Inter, sans-serif; fill: #fff; text-anchor: middle; }
.time { font: 700 27.500px Inter, sans-serif; fill: #111; }
.batt { font: 700 18px Inter, sans-serif; fill: #fff; text-anchor: middle; }
.station { font: 600 17px Inter, sans-serif; fill: #333; stroke: #fff; stroke-width: 2px; paint-order: stroke; }
.leave { font: 700 23.500px Inter, sans-serif; fill: #4b7092; }
.cut { font-size: 26px; fill: #222; }
.area { font-size: 17px; font-weight: 500; letter-spacing: 1.400px; fill: #666a70; }
.area .end { font-size: 19.500px; letter-spacing: 2.200px; }
.city { font-size: 22.500px; fill: #333; }
.van { font-size: 38.500px; font-weight: 500; fill: #202225; }

/* search sheet shared by several screens */
.search { flex: none; height: 31px; margin-top: -16px; background: #fff; border-radius: 4px; box-shadow: 0 1px 3px #0005; display: flex; align-items: center; padding: 0 6.500px 0 8px; font-size: 9px; color: #407093; }
.search > svg { width: 12px; height: 12px; }
.search b { flex: 1; margin-left: 6px; font-weight: 700; }
.search .swap { width: 21px; height: 21px; }
.tabs { flex: none; height: 27px; margin-top: 13.300px; display: grid; grid-template-columns: repeat(4, 1fr); gap: 7px; }
.tabs i { display: flex; align-items: center; justify-content: center; background: #3b6282; border-radius: 4px; color: #fff; }
.tabs .on { background: #27495d; }
.tabs svg { width: 12px; height: 12px; }
.cats { flex: none; height: 30px; margin-top: 12px; display: flex; gap: 8.300px; align-items: center; }
.cats span { width: 55.300px; height: 30px; border-radius: 2px; background: #fff; color: #666; font-size: 6.700px; line-height: 7px; text-align: center; }
.cats span::before { content: ""; display: block; width: 12.600px; height: 12.600px; margin: 5px auto 2px; border-radius: 50%; background: #d8d8d8; }
.cats .on { background: #27495d; color: #fff; }
.cats b { width: 26px; height: 26px; margin-left: 2px; border-radius: 50%; background: #fff; display: flex; align-items: center; justify-content: center; }
.cats b svg { width: 7px; height: 10px; }

.list { flex: 1; margin-top: 16px; background: #fff; border-radius: 5px 5px 0 0; padding: 0 6px 0 7px; min-height: 0; }
article { height: 68.200px; padding-top: 7.500px; border-bottom: 1px solid #e4e4e4; display: grid; grid-template-columns: 23px 1fr 7px; grid-template-rows: 25.500px auto; }
article:nth-child(1) { height: 92.300px; }
article:nth-child(3) { height: 66.800px; }
article:nth-child(4) { height: 70.200px; }
.lp { width: 17px; height: 19.500px; margin-top: .5px; }
.place { min-width: 0; white-space: nowrap; }
.place small { display: block; font-size: 6.250px; line-height: 8px; color: #407093; }
.place h3 { font-size: 7.900px; line-height: 11.500px; font-weight: 500; color: #555; }
.place p { font-size: 6.700px; line-height: 6px; color: #8d8d8d; }
.nw { width: 6.500px; height: 6.500px; margin: 11px 0 0 -4px; }
.details { grid-column: 2; width: 153.300px; height: 21px; margin-top: 5.500px; border: 1px solid #ececec; border-radius: 2px; padding: 0 6.500px 0 7px; }
article:nth-child(4) .details { margin-top: 6.500px; }
.open { height: 44.500px; }
.details b { height: 19px; display: flex; align-items: center; font-size: 6.500px; font-weight: 500; color: #5c5c5c; }
.details b::before { content: ""; width: 9.600px; height: 9.600px; margin-right: 7px; border-radius: 50%; background: #d8d8d8; }
.details b svg { width: 7px; height: 4.200px; margin-left: auto; }
.details p { font-size: 5.600px; line-height: 8px; color: #606060; white-space: nowrap; }

.set-list { flex: none; margin-top: 12px; background: #fff; border-radius: 4px; padding: 0 6.500px; }
.set-list div { height: 31.500px; display: flex; align-items: center; color: #6a6a6a; font-size: 8.600px; }
.set-list div + div { border-top: 1px solid #e5e5e5; }
.set-list svg { width: 15px; height: 17px; margin-right: 6px; }
.set-list span { flex: 1; }
.set-list u { width: 28px; height: 15px; border: 1px solid #dcdcdc; border-radius: 8px; text-align: center; line-height: 13px; font-size: 7.500px; }
.save { flex: none; height: 31.500px; margin-top: 12px; border-radius: 4px; background: #fff; display: flex; align-items: center; padding-left: 9px; color: #407093; font-size: 9.200px; font-weight: 600; }
.save svg { width: 15px; height: 15px; margin-right: 6px; }
.indicator { position: absolute; left: 75px; bottom: 5px; width: 84px; height: 3px; border-radius: 2px; background: #eee; }
.home .indicator { background: #c3d6c1; }
.dark { background: #182028; }

/* home screen */
.green { background: #37aa2e; padding: 0 7.300px; }
.goto { flex: none; height: 67.700px; margin-top: -17.300px; background: #fff; border-radius: 4px; box-shadow: 0 1px 4px #0003; color: #5d5d5d; font-size: 9.900px; }
.goto b { font-weight: 600; }
.disc { flex: none; width: 18px; height: 18px; border-radius: 50%; background: #407093; color: #fff; display: flex; align-items: center; justify-content: center; }
.disc svg { width: 8px; height: 8px; }
.disc .lg { width: 11px; height: 11px; }
.somewhere { height: 33.700px; display: flex; align-items: center; padding-left: 7.500px; border-bottom: 1px solid #ddd; }
.somewhere b { flex: 1; text-align: center; padding-right: 26px; }
.shortcuts { display: flex; height: 34px; }
.gohome { width: 142px; display: flex; align-items: center; gap: 6px; padding-left: 7.500px; }
.short { width: 39px; border-left: 1px solid #ddd; display: flex; flex-direction: column; align-items: center; padding-top: 3.500px; font-size: 6.500px; font-weight: 600; line-height: 10px; }
.modes { flex: none; margin-top: 11.500px; display: grid; grid-template-columns: repeat(5, 1fr); gap: 5px; }
.modes div { position: relative; height: 32.300px; border-radius: 5px; background: #2e8c2a; color: #fff; font-size: 6.800px; line-height: 8px; text-align: center; padding-top: 4px; }
.modes svg { width: 24px; height: 16px; margin: 0 auto; }
.modes span { display: block; margin-top: .5px; }
.modes em { position: absolute; right: 6px; top: 12px; width: 8px; height: 8px; border-radius: 50%; background: #ff8710; font-size: 5.500px; }
.ad { flex: none; height: 100.300px; margin-top: 15px; border-radius: 4px; background: #fff; padding: 10px; }
.adtop { display: flex; gap: 10.500px; height: 60px; }
.audible { width: 49.700px; height: 49.700px; }
.adcopy { white-space: nowrap; color: #858585; }
.adcopy strong { display: block; font-size: 9.400px; line-height: 13px; font-weight: 400; color: #777; }
.adcopy p { font-size: 6.900px; line-height: 8px; margin-top: 2px; }
.adcopy small { display: flex; gap: 3px; align-items: center; margin-top: 9.500px; font-size: 5.800px; color: #999; }
.adcopy i { width: 12.600px; height: 9px; background: #a5bccd; color: #fff; text-align: center; line-height: 9px; font-size: 6px; }
.discover { height: 20.500px; border-radius: 11px; background: #5584a5; color: #fff; text-align: center; font-size: 10.300px; line-height: 20.500px; }
.remove { flex: none; align-self: flex-end; width: 84px; height: 16px; margin-top: 6.500px; border: 1px solid #9fd39b; border-radius: 8px; color: #fff; font-size: 6.500px; font-weight: 700; line-height: 12px; text-align: center; white-space: nowrap; }

/* trip planner */
.trip .map { height: 75px; }
.trip .panel { margin-top: -8.300px; background: #4b7092; padding: 0 7px; }
.route { position: relative; flex: none; margin-top: 3.600px; display: grid; gap: 4.300px; }
.leg { height: 27.800px; display: flex; align-items: center; background: #45647f; border-radius: 4px; padding-left: 8px; color: #b1c1ce; font-size: 8.300px; }
.leg > span { width: 22.500px; }
.leg svg { width: 15.500px; height: 17px; }
.leg b { margin-left: 4px; color: #fff; font-size: 8.900px; font-weight: 600; line-height: 11px; }
.leg small { display: block; font-size: 7.200px; line-height: 10px; color: #b1c1ce; font-weight: 400; }
.flip { position: absolute; right: 0; top: 19.600px; width: 21px; height: 21px; }
.direct { flex: none; margin-top: 11.800px; height: 69.700px; background: #fff; border-radius: 4px; overflow: hidden; display: grid; grid-template-columns: 1fr 1fr; grid-template-rows: 1fr 1fr; color: #666; }
.direct div { padding: 7px 5.500px 0 6px; }
.direct div:nth-child(odd) { border-right: 1px solid #ddd; }
.direct div:nth-child(-n+2) { border-bottom: 1px solid #ddd; }
.direct p { display: flex; align-items: baseline; height: 14px; line-height: 14px; }
.direct svg { align-self: center; margin-right: auto; color: #407093; width: 12px; height: 12px; }
.direct .w { width: 8px; }
.direct .bk { width: 17px; height: 10px; }
.direct em { font-size: 7.500px; }
.direct b { margin-left: 4px; font-size: 10.600px; }
.direct s { font-weight: 400; }
.direct small, .trips small { font-size: 5.300px; margin-left: 2px; font-weight: 400; color: #999; }
.direct span { display: block; font-size: 6.300px; line-height: 10px; margin-top: 1px; }
.direct .blank { background: #edf5fb; }
.trip h2 { font-size: 8.700px; line-height: 12px; font-weight: 500; color: #edf2f6; margin: 9.300px 0 2.700px 2px; }
.trips { flex: 1; background: #fff; border-radius: 4px 4px 0 0; color: #666; }
.trips > div { position: relative; height: 41.800px; padding: 7px 6px 0; border-bottom: 1px solid #ddd; display: grid; grid-template-columns: 149.500px 24px 1fr; grid-template-rows: 14px 1fr; align-items: center; }
.trips .t1 { height: 60px; padding-top: 6px; grid-template-rows: 33px 1fr; }
.line { display: flex; align-items: center; gap: 2.500px; font-size: 9.300px; }
.t1 .line { flex-wrap: wrap; row-gap: 4px; padding-right: 8px; }
.tr { width: 14.500px; height: 14.500px; }
q { display: flex; align-items: center; height: 14px; border: 1px solid #e6e6e6; border-radius: 3px; padding: 0 2px 0 1.500px; white-space: pre; letter-spacing: .1px; word-spacing: -.1px; }
q svg { width: 8px; height: 8px; margin-right: 2px; }
q.wk { width: 14px; padding: 0; justify-content: center; color: #8c8c8c; }
.wk svg { width: 9px; height: 10px; margin: 0; }
q s { color: #aaa; }
.trips b { font-size: 7.600px; color: #4489c4; }
.trips strong { text-align: right; font-size: 10.600px; white-space: nowrap; }
.trips p { grid-column: 1 / -1; font-size: 7px; padding-bottom: 0; }
.trips p span { color: #a6a6a6; }
.dock { position: absolute; left: 0; bottom: 0; height: 68.500px; width: 247px; background: #415f78; display: flex; padding: 5px 0 0 5.500px; box-shadow: 0 -1px 3px #0003; }
.dock div { flex: 0 0 41px; text-align: center; color: #dfe6eb; font-size: 6.400px; line-height: 12px; white-space: nowrap; }
.dock .on { color: #fff; font-weight: 600; }
.dock i { display: block; width: 28px; height: 28px; margin: 0 auto 1px; border-radius: 50%; background: #374e66; }
.dock .on i { border: 1.500px solid #fff; }
.dock .on svg { width: 26px; height: 26px; }
.dock svg { width: 28px; height: 28px; }

/* map exploration */
.explore .map { height: 360px; }
.explore .panel { margin-top: 15.500px; padding: 0 7.500px; }
.explore .search { margin-top: -15.500px; }
.explore .cats { margin-top: 7px; }
.explore .list { margin-top: 7.400px; }

/* connectors and captions */
.flow { position: absolute; inset: 0; width: 1920px; height: 1080px; fill: none; stroke: #f00; stroke-width: 2px; }
.note { position: absolute; font-size: 7.900px; line-height: 9px; color: #111; font-weight: 500; white-space: nowrap; letter-spacing: .2px; }
.n1 { left: 272.700px; top: 705px; }
.n2 { left: 617px; top: 546.500px; }
.n3 { left: 879px; top: 325.500px; }
.n4 { left: 981px; top: 631.500px; }
.n5 { left: 911px; top: 958px; }
.n6 { right: 161px; top: 363.500px; text-align: right; }
footer { position: absolute; right: 38px; top: 1034px; font-size: 19px; line-height: 24px; color: #37aa2e; font-weight: 300; }
```
